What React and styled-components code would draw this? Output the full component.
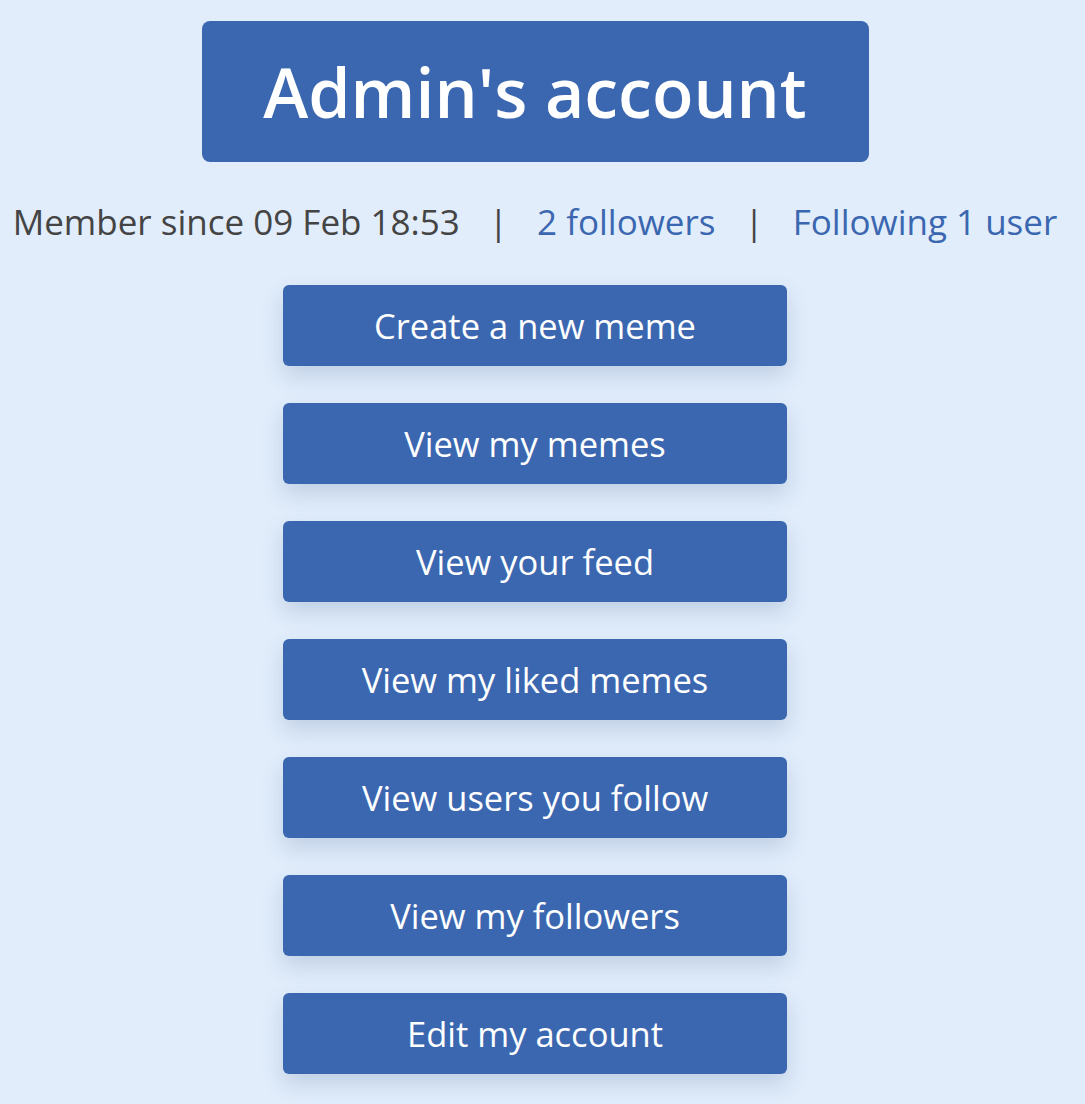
import React from 'react';
import styled, { createGlobalStyle } from 'styled-components';

const GlobalStyle = createGlobalStyle`
    html, body {
        margin: 0;
        padding: 0;
        background-color: #e1edfb;
    }
    body {
        font-family: "Open Sans", "Noto Sans", sans-serif;
    }
`;

const Page = styled.div`
    width: 1070px;
    display: flex;
    flex-direction: column;
    align-items: center;
    padding: 21px 0 40px;
`;

const TitleBox = styled.h1`
    margin: 0;
    width: 667px;
    height: 141px;
    box-sizing: border-box;
    display: flex;
    align-items: center;
    justify-content: center;
    background-color: #3b67b0;
    border-radius: 8px;
    color: #fff;
    font-size: 68px;
    font-weight: 600;
`;

const InfoLine = styled.div`
    margin-top: 36px;
    display: flex;
    align-items: center;
    gap: 29px;
    font-size: 35px;
    color: #444;
    white-space: nowrap;
`;

const InfoLink = styled.a`
    color: #3b67b0;
    text-decoration: none;
`;

const ButtonList = styled.div`
    margin-top: 40px;
    display: flex;
    flex-direction: column;
    gap: 37px;
`;

const ActionButton = styled.button`
    width: 504px;
    height: 81px;
    background-color: #3b67b0;
    color: #fff;
    border: none;
    border-radius: 6px;
    font-family: inherit;
    font-size: 34.5px;
    cursor: pointer;
    box-shadow: 0 10px 22px rgba(40, 70, 120, 0.18);
`;

const actions = [
    'Create a new meme',
    'View my memes',
    'View your feed',
    'View my liked memes',
    'View users you follow',
    'View my followers',
    'Edit my account',
];

const App = () => {
    return (
        <>
            <GlobalStyle />
            <Page>
                <TitleBox>Admin's account</TitleBox>
                <InfoLine>
                    <span>Member since 09 Feb 18:53</span>
                    <span>|</span>
                    <InfoLink href="#">2 followers</InfoLink>
                    <span>|</span>
                    <InfoLink href="#">Following 1 user</InfoLink>
                </InfoLine>
                <ButtonList>
                    {actions.map(label => (
                        <ActionButton key={label}>{label}</ActionButton>
                    ))}
                </ButtonList>
            </Page>
        </>
    );
};

export default App;
